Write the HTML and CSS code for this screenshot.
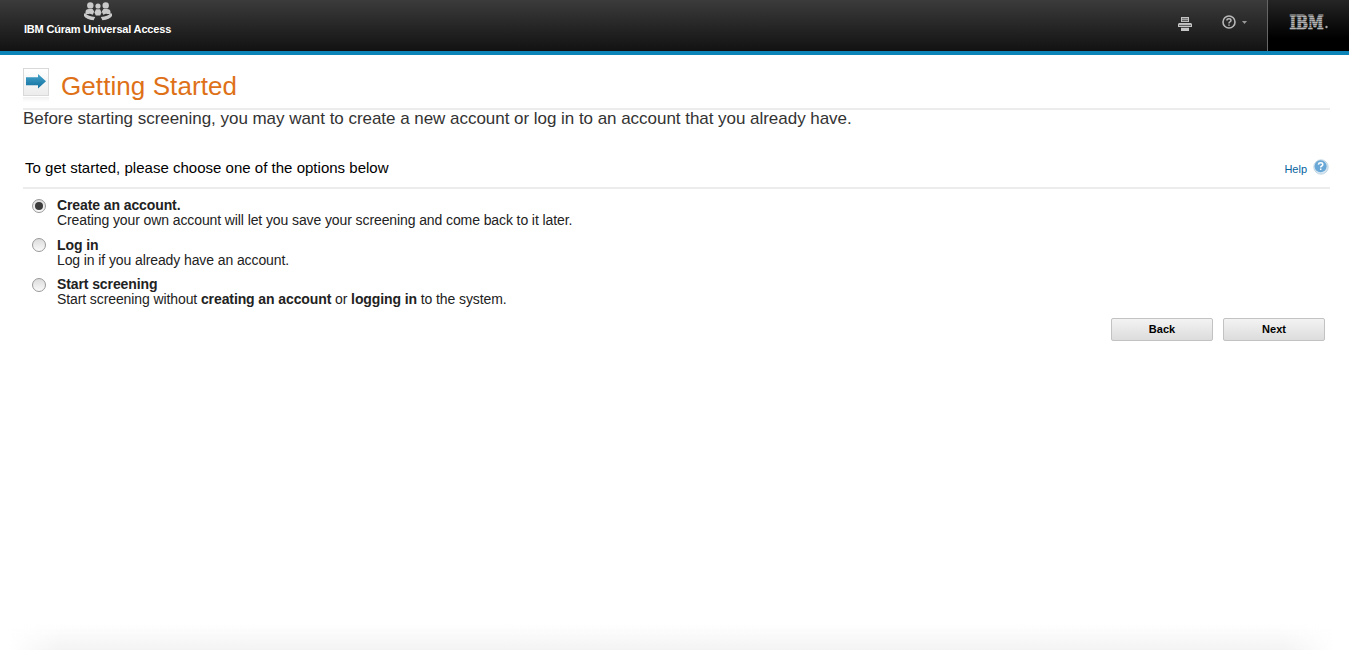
FILE: index.html
```html
<!DOCTYPE html>
<html lang="en">
<head>
<meta charset="utf-8">
<title>Getting Started</title>
<link rel="stylesheet" href="styles.css">
</head>
<body>
<header class="banner">
  <div class="brand">
    <svg class="brand-icon" viewBox="0 0 28 19" width="28" height="19" fill="#c9c9c9">
      <circle cx="6.3" cy="3.4" r="3.2"/><circle cx="21.7" cy="3.4" r="3.2"/><circle cx="14" cy="4" r="2.6"/>
      <path d="M1.5 12V10Q1.5 7 5 7H8.6L10.2 9.6 8.8 12.8 5.5 11.4V12Z"/>
      <path d="M26.5 12V10Q26.5 7 23 7H19.4L17.8 9.6 19.2 12.8 22.5 11.4V12Z"/>
      <path d="M12 7.3H16L17.5 10.4 16.2 13.4H11.8L10.5 10.4Z"/>
      <path d="M0 11.5V14Q2 17.5 9.6 18.2L11.2 15Q4 14.4 1.6 11.5Z"/>
      <path d="M28 11.5V14Q26 17.5 18.4 18.2L16.8 15Q24 14.4 26.4 11.5Z"/>
    </svg>
    <span class="brand-name">IBM Cúram Universal Access</span>
  </div>
  <div class="tools">
    <svg class="print" viewBox="0 0 14 14" width="14" height="14">
      <path fill="#c4c4c4" d="M3 0H11V5H3ZM1 6H13L14 7V10H0V7ZM3 10.8H11V14H3Z"/>
      <path stroke="#555" d="M4 1.8H10M4 3.6H10M1 8.4H13"/>
    </svg>
    <svg class="question" viewBox="0 0 14 14" width="14" height="14" fill="none" stroke="#b8b8b8">
      <circle cx="7" cy="7" r="6" stroke-width="1.6"/>
      <path stroke-width="1.5" d="M4.9 5.5Q5 3.8 7 3.8T9 5.5Q9 6.5 7.6 7.1Q7 7.4 7 8.4M7 9.4V10.7"/>
    </svg>
    <svg class="caret" viewBox="0 0 5 3" width="5" height="3"><path fill="#999" d="M0 0H5L2.5 3Z"/></svg>
  </div>
  <div class="company">
    <svg class="logo" viewBox="0 0 42 30" width="42" height="30">
      <defs>
        <pattern id="bars" width="42" height="2" patternUnits="userSpaceOnUse"><rect width="42" height="2" fill="#747474"/><rect width="42" height="1" fill="#b4b4b4"/></pattern>
      </defs>
      <text x="1.5" y="22.5" textLength="34" lengthAdjust="spacingAndGlyphs" fill="url(#bars)" stroke="url(#bars)" stroke-width="1">IBM</text>
      <circle cx="38.5" cy="21" r="1.2" fill="#aaa"/>
    </svg>
  </div>
</header>
<main class="page">
  <div class="heading">
    <span class="tile-wrap"><span class="tile"><svg viewBox="0 0 20 15" width="20" height="15">
      <defs><linearGradient id="arrow" x2="0" y2="1"><stop stop-color="#45a5cb"/><stop offset="1" stop-color="#126e9e"/></linearGradient></defs>
      <path fill="url(#arrow)" d="M0 3.2H12V0L20 7.2 12 14.5V11.2H0Z"/>
    </svg></span><span class="reflection"></span></span>
    <h1>Getting Started</h1>
  </div>
  <p class="intro">Before starting screening, you may want to create a new account or log in to an account that you already have.</p>
  <div class="prompt-row">
    <span class="prompt">To get started, please choose one of the options below</span>
    <a class="help"><span>Help</span>
      <svg viewBox="0 0 16 16" width="16" height="16"><circle cx="8" cy="8" r="7.2" fill="#d5e6f2" stroke="#b7cede" stroke-width=".8"/><circle cx="7.6" cy="7.2" r="6" fill="#69a8d6"/><path fill="none" stroke="#fff" stroke-width="1.5" d="M5.4 5.6Q5.6 3.8 7.7 3.8T9.8 5.5Q9.8 6.6 8.4 7.2Q7.7 7.5 7.7 8.5M7.7 9.6V11.1"/></svg>
    </a>
  </div>
  <div class="options">
    <label class="option"><i class="radio selected"></i><span><b>Create an account.</b><span class="desc">Creating your own account will let you save your screening and come back to it later.</span></span></label>
    <label class="option"><i class="radio"></i><span><b>Log in</b><span class="desc">Log in if you already have an account.</span></span></label>
    <label class="option"><i class="radio"></i><span><b>Start screening</b><span class="desc">Start screening without <b>creating an account</b> or <b>logging in</b> to the system.</span></span></label>
  </div>
  <div class="actions"><button>Back</button><button>Next</button></div>
</main>
<div class="footer-shade"></div>
</body>
</html>
```
FILE: styles.css
```css
* { box-sizing: border-box; }
body { margin: 0; height: 650px; overflow: hidden; display: flex; flex-direction: column; background: #fff; color: #222; font-family: "Liberation Sans", Arial, sans-serif; }
.banner { height: 55px; flex: none; display: flex; border-bottom: 4px solid #0d84b8; background: linear-gradient(#3b3b3b, #121212); }
.brand { width: 147px; margin-left: 24px; display: flex; flex-direction: column; align-items: center; }
.brand-icon { margin-top: 2px; }
.brand-name { margin-top: 2px; font-size: 11px; line-height: 13px; letter-spacing: -0.18px; font-weight: bold; color: #fff; white-space: nowrap; }
.tools { margin-left: auto; display: flex; align-items: flex-start; }
.print { margin: 17px 30px 0 0; }
.question { margin: 15px 6px 0 0; }
.caret { margin: 21px 20px 0 0; }
.company { width: 82px; border-left: 1px solid #666; background: linear-gradient(#252525, #000 75%); padding: 6px 0 0 20px; }
.logo { display: block; font: bold 19px "DejaVu Serif", serif; }
.page { flex: 1; padding: 0 19px 0 23px; }
.heading { height: 55px; border-bottom: 2px solid #ececec; display: flex; }
.tile-wrap { margin: 13px 12px 0 0; }
.tile { width: 26px; height: 28px; border: 1px solid #d9d9d9; background: linear-gradient(#fff, #ececec); display: flex; padding: 5px 0 0 2px; }
.reflection { display: block; height: 5px; margin-top: 1px; background: linear-gradient(#f0f0f0, #fff); }
h1 { margin: 16px 0 0; font-size: 26px; line-height: 30px; letter-spacing: 0.08px; font-weight: normal; color: #de7118; }
.intro { margin: 0; height: 39px; font-size: 17px; line-height: 18px; letter-spacing: -0.035px; color: #333; white-space: nowrap; }
.prompt-row { height: 40px; border-bottom: 2px solid #ececec; display: flex; justify-content: space-between; padding: 9px 1px 0 2px; }
.prompt { font-size: 15px; line-height: 19px; letter-spacing: 0.015px; color: #000; }
.help { display: flex; gap: 6px; font-size: 11px; line-height: 23px; color: #05629e; }
.help svg { margin-top: 1px; }
.options { padding: 9px 0 0 9px; font-size: 14px; line-height: 15px; letter-spacing: -0.1px; }
.option { display: flex; gap: 11px; height: 39.6px; }
.desc { display: block; }
.radio { width: 14px; height: 14px; margin-top: 0.5px; border: 1px solid #999; border-radius: 50%; background: linear-gradient(#dcdcdc, #fafafa); display: grid; place-items: center; }
.selected::after { content: ""; width: 8px; height: 8px; border-radius: 50%; background: #3c3c3c; }
.actions { display: flex; justify-content: flex-end; gap: 10px; padding: 1px 5px 0 0; }
button { width: 102px; height: 23px; padding: 0 0 1px; border: 1px solid #c2c2c2; border-radius: 2px; background: linear-gradient(#f3f3f3, #dcdcdc); font: bold 11px "Liberation Sans", sans-serif; color: #000; }
.footer-shade { height: 26px; flex: none; margin: 0 14px 0 8px; background: linear-gradient(transparent, #f3f3f3); -webkit-mask-image: linear-gradient(90deg, transparent, #000 52px, #000 calc(100% - 52px), transparent); mask-image: linear-gradient(90deg, transparent, #000 52px, #000 calc(100% - 52px), transparent); }
```
